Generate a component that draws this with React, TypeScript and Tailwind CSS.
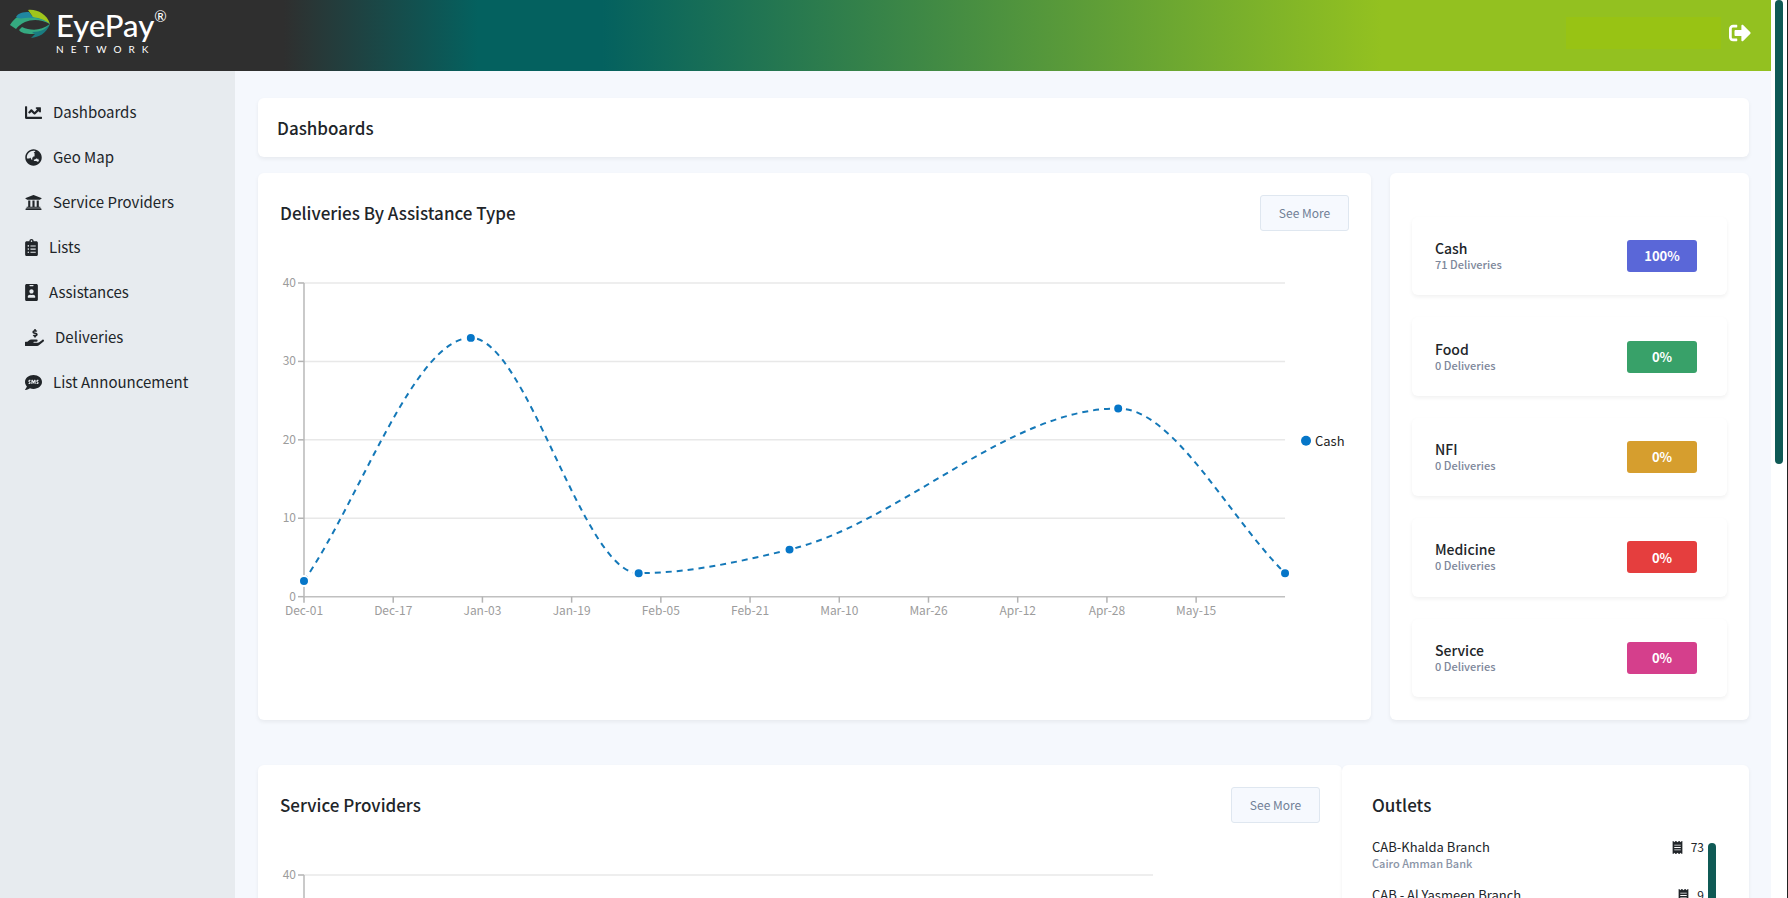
import React from "react";
import type { IconType } from "react-icons";
import {
  FaChartLine,
  FaClipboardList,
  FaGlobeAsia,
  FaHandHoldingUsd,
  FaIdBadge,
  FaReceipt,
  FaSignOutAlt,
  FaSms,
  FaUniversity,
} from "react-icons/fa";

type NavItem = { label: string; icon: IconType; width: string };

const navItems: NavItem[] = [
  { label: "Dashboards", icon: FaChartLine, width: "w-[17px]" },
  { label: "Geo Map", icon: FaGlobeAsia, width: "w-[17px]" },
  { label: "Service Providers", icon: FaUniversity, width: "w-[17px]" },
  { label: "Lists", icon: FaClipboardList, width: "w-[13px]" },
  { label: "Assistances", icon: FaIdBadge, width: "w-[13px]" },
  { label: "Deliveries", icon: FaHandHoldingUsd, width: "w-[19px]" },
  { label: "List Announcement", icon: FaSms, width: "w-[17px]" },
];

const assistance = [
  { name: "Cash", count: 71, share: "100%", color: "bg-[#5a67d8]" },
  { name: "Food", count: 0, share: "0%", color: "bg-[#38a169]" },
  { name: "NFI", count: 0, share: "0%", color: "bg-[#d69e2e]" },
  { name: "Medicine", count: 0, share: "0%", color: "bg-[#e53e3e]" },
  { name: "Service", count: 0, share: "0%", color: "bg-[#d53f8c]" },
];

const outlets = [
  { name: "CAB-Khalda Branch", bank: "Cairo Amman Bank", count: 73 },
  { name: "CAB - Al Yasmeen Branch", bank: "Cairo Amman Bank", count: 9 },
];

type Point = [number, number];

/* Monotone cubic interpolation, so the curve never overshoots its points. */
function monotonePath(points: Point[]): string {
  const n = points.length;
  const slopes: number[] = [];
  for (let i = 0; i < n - 1; i++) {
    slopes.push((points[i + 1][1] - points[i][1]) / (points[i + 1][0] - points[i][0]));
  }
  const tangents: number[] = new Array(n).fill(0);
  for (let i = 1; i < n - 1; i++) {
    const h0 = points[i][0] - points[i - 1][0];
    const h1 = points[i + 1][0] - points[i][0];
    const s0 = slopes[i - 1];
    const s1 = slopes[i];
    const p = (s0 * h1 + s1 * h0) / (h0 + h1);
    tangents[i] =
      (Math.sign(s0) + Math.sign(s1)) * Math.min(Math.abs(s0), Math.abs(s1), 0.5 * Math.abs(p));
  }
  tangents[0] = slopes[0];
  tangents[n - 1] = slopes[n - 2];
  let d = `M${points[0][0]},${points[0][1]}`;
  for (let i = 0; i < n - 1; i++) {
    const [x0, y0] = points[i];
    const [x1, y1] = points[i + 1];
    const dx = (x1 - x0) / 3;
    d += `C${x0 + dx},${y0 + dx * tangents[i]} ${x1 - dx},${y1 - dx * tangents[i + 1]} ${x1},${y1}`;
  }
  return d;
}

const TOP = 20;
const BOTTOM = 334;
const LEFT = 24;
const yFor = (value: number) => BOTTOM - (value * (BOTTOM - TOP)) / 40;

const series: Point[] = [
  [24, 2],
  [191, 33],
  [359, 3],
  [510, 6],
  [839, 24],
  [1006, 3],
];

const dates = [
  "Dec-01", "Dec-17", "Jan-03", "Jan-19", "Feb-05", "Feb-21",
  "Mar-10", "Mar-26", "Apr-12", "Apr-28", "May-15",
];

function Axes({ right, ticks, labels }: { right: number; ticks: number[]; labels: string[] }) {
  return (
    <>
      {ticks.map((v) => (
        <g key={v}>
          {v > 0 && (
            <line x1={LEFT} x2={right} y1={yFor(v)} y2={yFor(v)} stroke="#e8e8e8" strokeWidth="1.5" />
          )}
          <line x1={LEFT - 6} x2={LEFT} y1={yFor(v)} y2={yFor(v)} stroke="#b3b3b3" strokeWidth="1.5" />
          <text x={LEFT - 8} y={yFor(v) + 4} textAnchor="end" fontSize="12" fill="#9c9c9c">
            {v}
          </text>
        </g>
      ))}
      <line x1={LEFT} x2={LEFT} y1={TOP} y2={BOTTOM} stroke="#b8b8b8" strokeWidth="1.5" />
      <line x1={LEFT} x2={right} y1={BOTTOM} y2={BOTTOM} stroke="#c0c0c0" strokeWidth="1.5" />
      {labels.map((d, i) => {
        const x = LEFT + i * 89.3;
        return (
          <g key={d}>
            <line x1={x} x2={x} y1={BOTTOM} y2={BOTTOM + 6} stroke="#b3b3b3" strokeWidth="1.5" />
            <text x={x} y={BOTTOM + 18} textAnchor="middle" fontSize="12" fill="#9c9c9c">
              {d}
            </text>
          </g>
        );
      })}
    </>
  );
}

function DeliveriesChart() {
  const points = series.map(([x, v]): Point => [x, yFor(v)]);
  return (
    <svg viewBox="0 0 1070 370" className="w-full" role="img" aria-label="Deliveries By Assistance Type">
      <Axes right={1006} ticks={[0, 10, 20, 30, 40]} labels={dates} />
      <path d={monotonePath(points)} fill="none" stroke="#1478b8" strokeWidth="2" strokeDasharray="6 5" />
      {points.map(([x, y]) => (
        <circle key={x} cx={x} cy={y} r="5" fill="#0676c8" stroke="#fff" strokeWidth="2" />
      ))}
      <circle cx="1027" cy="178" r="5" fill="#0676c8" />
      <text x="1036" y="183" fontSize="13" fill="#222">
        Cash
      </text>
    </svg>
  );
}

function ProvidersChart() {
  return (
    <svg viewBox="0 0 1040 370" className="w-full" role="img" aria-label="Service Providers">
      <Axes right={873} ticks={[40]} labels={[]} />
    </svg>
  );
}

function Logo() {
  return (
    <a href="#" aria-label="EyePay Network" className="flex items-start gap-1.5 pl-2 font-['Lato',sans-serif] text-white">
      <svg viewBox="0 0 42 30" className="mt-[9px] h-[30px] w-[42px]" aria-hidden="true">
        <path d="M2 16C6 10 10 6 17 7C27 6 37 9 42 15C33 10 24 10 17 13C13 15 10 17 8 20Z" fill="#35a980" />
        <path d="M8 8C10 4 15 3 21 3L25 8C33 9 38 11 42 15C34 9 25 8 17 9C12 10 9 9 8 8Z" fill="#2087a0" />
        <path d="M20 1C29 0 39 5 42 15C36 10 30 9 25 8Z" fill="#9fc51c" />
        <path d="M14 18C23 22 33 22 42 15C38 22 31 25 24 25C18 25 13 24 11 21Z" fill="#35a980" />
        <path d="M24 23C33 23 38 20 42 15C38 25 31 28 23 29L27 25Z" fill="#1a7b80" />
      </svg>
      <span className="flex flex-col">
        <span className="flex items-start">
          <span className="pt-2 text-[31px] leading-[35px] font-medium">EyePay</span>
          <span className="pt-2 text-[15px] leading-4">®</span>
        </span>
        <span className="text-[10px] leading-3 tracking-[7px]">NETWORK</span>
      </span>
    </a>
  );
}

function SeeMore() {
  return (
    <button
      type="button"
      className="h-9 w-[89px] rounded-[3px] border border-[#dfe7f0] bg-[#f6f9fe] text-[12px] text-[#718096]"
    >
      See More
    </button>
  );
}

const card = "rounded-md bg-white shadow-[0_2px_4px_rgba(0,0,0,0.06)]";

export default function App() {
  return (
    <div className="flex h-screen overflow-hidden border-r border-[#222] bg-white font-['Noto_Sans_CJK_SC','Noto_Sans',sans-serif] text-[#212529]">
      <div className="flex min-w-0 flex-1 flex-col">
        <header className="flex h-[71px] shrink-0 items-start justify-between bg-[linear-gradient(to_right,#2f2f2f_16%,#04615f_27%,#04615f_34%,#93c120_78%)]">
          <Logo />
          <div className="flex items-center gap-2 pt-[17px] pr-5">
            <span className="h-8 w-[155px] bg-[#98c314]" />
            <button type="button" aria-label="Sign out" className="text-[22px] text-white">
              <FaSignOutAlt />
            </button>
          </div>
        </header>

        <div className="flex min-h-0 flex-1">
          <nav className="w-[235px] shrink-0 bg-[#e7ebef] pt-[19px] pl-[25px]">
            <ul>
              {navItems.map(({ label, icon: Icon, width }) => (
                <li key={label}>
                  <a href="#" className="flex h-[45px] items-center gap-[11px] text-[15px]">
                    <Icon className={`h-[17px] ${width}`} aria-hidden="true" />
                    {label}
                  </a>
                </li>
              ))}
            </ul>
          </nav>

          <main className="flex min-w-0 flex-1 flex-col overflow-hidden bg-[#f5f8fd] pt-[27px] pr-[22px] pl-[23px]">
            <h1 className={`${card} flex h-[59px] shrink-0 items-center px-[19px] text-[17px] font-medium`}>
              Dashboards
            </h1>

            <div className="mt-4 flex h-[547px] shrink-0 gap-[19px]">
              <section className={`${card} min-w-0 flex-1 px-[22px] pt-[22px]`}>
                <div className="flex items-center justify-between">
                  <h2 className="text-[17px] font-medium">Deliveries By Assistance Type</h2>
                  <SeeMore />
                </div>
                <div className="mt-8">
                  <DeliveriesChart />
                </div>
              </section>

              <section className={`${card} flex w-[359px] shrink-0 flex-col gap-[22px] px-[22px] pt-11 pb-[23px]`}>
                {assistance.map((item) => (
                  <div key={item.name} className={`${card} flex flex-1 items-center justify-between pr-[30px] pl-[23px]`}>
                    <div>
                      <p className="text-[14px] leading-4 font-medium">{item.name}</p>
                      <p className="text-[11px] leading-4 font-medium text-[#7d879a]">{item.count} Deliveries</p>
                    </div>
                    <span className={`flex h-8 w-[70px] items-center justify-center rounded-[3px] text-[13px] font-bold text-white ${item.color}`}>
                      {item.share}
                    </span>
                  </div>
                ))}
              </section>
            </div>

            <div className="mt-[45px] flex h-[547px] shrink-0">
              <section className={`${card} min-w-0 flex-1 px-[22px] pt-[22px]`}>
                <div className="flex items-center justify-between">
                  <h2 className="text-[17px] font-medium">Service Providers</h2>
                  <SeeMore />
                </div>
                <div className="mt-8">
                  <ProvidersChart />
                </div>
              </section>

              <section className={`${card} w-[407px] shrink-0 pt-7 pr-[33px] pl-[30px]`}>
                <h2 className="text-[17px] leading-6 font-medium">Outlets</h2>
                <div className="mt-[22px] flex gap-1">
                  <ul className="min-w-0 flex-1">
                    {outlets.map((o) => (
                      <li key={o.name} className="flex h-12 items-start justify-between">
                        <div>
                          <p className="text-[13px] leading-4">{o.name}</p>
                          <p className="text-[11px] leading-4 font-medium text-[#8a94a6]">{o.bank}</p>
                        </div>
                        <p className="flex items-center gap-2 text-[12px] leading-4">
                          <FaReceipt className="h-[13px] w-[11px]" aria-hidden="true" />
                          {o.count}
                        </p>
                      </li>
                    ))}
                  </ul>
                  <div className="mt-1 h-40 w-2 rounded-full bg-[#0f5a55]" />
                </div>
              </section>
            </div>
          </main>
        </div>
      </div>

      <div className="flex w-4 shrink-0 justify-center">
        <div className="h-[464px] w-2 rounded-full bg-[#0f5a55]" />
      </div>
    </div>
  );
}
